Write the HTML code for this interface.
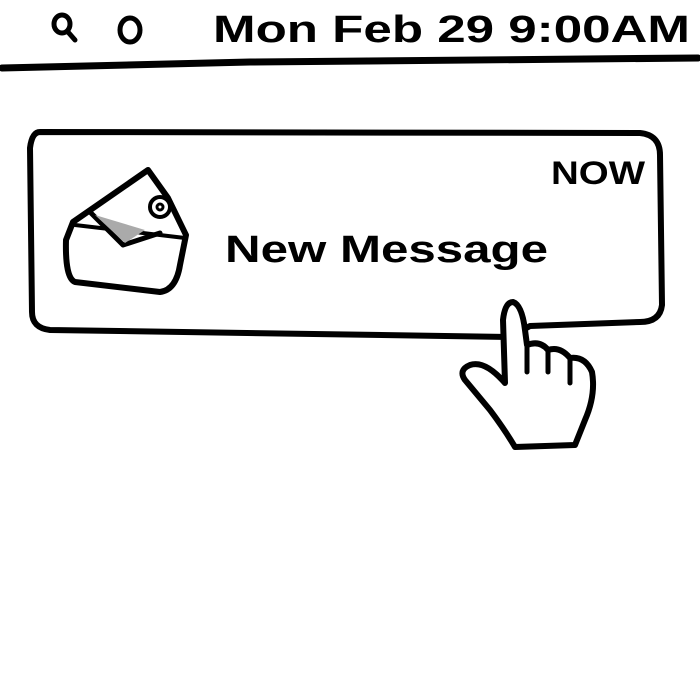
<!DOCTYPE html>
<html><head><style>
html,body{margin:0;padding:0;background:#fff;width:700px;height:700px;overflow:hidden}
svg{display:block}
text{font-family:"Liberation Sans",sans-serif;font-weight:bold;fill:#000}
</style></head><body>
<svg width="700" height="700" viewBox="0 0 700 700" xmlns="http://www.w3.org/2000/svg">
<g fill="none" stroke="#000" stroke-linecap="round" stroke-linejoin="round">
<ellipse cx="62" cy="24" rx="8" ry="9" stroke-width="5"/>
<line x1="68" y1="32" x2="75" y2="40" stroke-width="5"/>
<ellipse cx="130" cy="30" rx="10" ry="12" stroke-width="5"/>
<path d="M2,68 L250,62 L698,58" stroke-width="7"/>
<path d="M40,132 L640,133 Q660,135 660,155 L662,305 Q660,322 640,322 L530,326 L510,337 L50,330 Q32,328 32,312 L30,148 Q32,132 40,132 Z" stroke-width="6"/>
<path d="M73,222 L148,170 L168,198 L186,235 L180,265 Q176,290 160,292 L75,282 Q65,278 66,240 Z" stroke-width="6" fill="#fff"/>
<path d="M75,225 L185,238" stroke-width="4"/>
<path d="M90,212 L123,245 L160,233" stroke-width="5"/>
<path d="M95,215 L145,230 L125,243 Z" fill="#aaa" stroke="none"/>
<circle cx="160" cy="207" r="10" stroke-width="4" fill="#fff"/>
<circle cx="160" cy="207" r="3" stroke-width="3"/>
<path d="M505,383 L503,320 Q505,302 513,302 Q522,305 525,330 L527,345 Q540,340 548,350 Q560,346 570,358 Q585,356 592,372 Q596,395 585,420 L575,445 L515,447 Q505,430 490,410 L465,380 Q458,370 470,365 Q485,360 505,383 Z" stroke-width="6" fill="#fff"/>
<path d="M527,345 L527,372 M548,350 L548,372 M570,358 L570,383" stroke-width="5"/>
</g>
<text x="213" y="42" font-size="38" textLength="477" lengthAdjust="spacingAndGlyphs">Mon Feb 29 9:00AM</text>
<text x="551" y="184" font-size="32" textLength="94" lengthAdjust="spacingAndGlyphs">NOW</text>
<text x="225" y="262" font-size="38" textLength="323" lengthAdjust="spacingAndGlyphs">New Message</text>
</svg>
</body></html>
